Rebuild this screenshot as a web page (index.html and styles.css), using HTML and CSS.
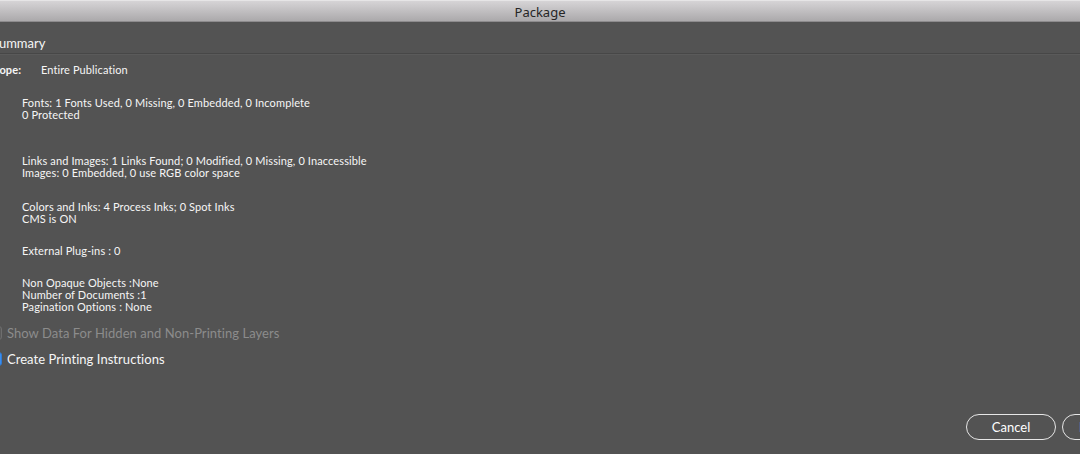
FILE: index.html
```html
<!DOCTYPE html>
<html>
<head>
<meta charset="utf-8">
<link rel="stylesheet" href="styles.css">
</head>
<body>
<div class="window">
  <div class="titlebar">Package</div>
  <div class="content">
    <div class="section-header">Summary</div>
    <div class="scope">
      <span class="scope-label">Scope:</span>
      <span class="scope-value">Entire Publication</span>
    </div>
    <div class="info info-fonts">
      <div>Fonts: 1 Fonts Used, 0 Missing, 0 Embedded, 0 Incomplete</div>
      <div>0 Protected</div>
    </div>
    <div class="info info-links">
      <div>Links and Images: 1 Links Found; 0 Modified, 0 Missing, 0 Inaccessible</div>
      <div>Images: 0 Embedded, 0 use RGB color space</div>
    </div>
    <div class="info info-colors">
      <div>Colors and Inks: 4 Process Inks; 0 Spot Inks</div>
      <div>CMS is ON</div>
    </div>
    <div class="info info-plugins">
      <div>External Plug-ins : 0</div>
    </div>
    <div class="info info-misc">
      <div>Non Opaque Objects :None</div>
      <div>Number of Documents :1</div>
      <div>Pagination Options : None</div>
    </div>
    <label class="check check-disabled"><span class="box"></span><span>Show Data For Hidden and Non-Printing Layers</span></label>
    <label class="check check-on"><span class="box"></span><span>Create Printing Instructions</span></label>
  </div>
  <div class="footer">
    <button class="btn">Cancel</button>
    <button class="btn">Package...</button>
  </div>
</div>
</body>
</html>
```
FILE: styles.css
```css
html, body {
  margin: 0;
  padding: 0;
  width: 1080px;
  height: 454px;
  overflow: hidden;
  background: #535353;
}
.window {
  width: 1080px;
  height: 454px;
  display: flex;
  flex-direction: column;
  font-family: "Lato", "Liberation Sans", sans-serif;
  color: #f6f6f6;
}
.titlebar {
  height: 20px;
  line-height: 22px;
  text-align: center;
  font-family: "Noto Sans", "Liberation Sans", sans-serif;
  font-size: 13px;
  color: #262626;
  background: linear-gradient(#d6d4d6, #aba9ab);
  border-top: 1px solid #e6e5e6;
  border-bottom: 1px solid #8d8b8d;
}
.content {
  margin-left: -12px;
  display: flex;
  flex-direction: column;
}
.section-header {
  margin-top: 13px;
  padding-left: 4px;
  font-size: 13px;
  line-height: 16px;
  padding-bottom: 2px;
  border-bottom: 1px solid #474747;
  box-shadow: 0 1px 0 #5a5a5a;
  width: 1200px;
}
.scope {
  margin-top: 10px;
  display: flex;
  font-size: 11px;
  line-height: 12px;
  letter-spacing: 0.1px;
}
.scope-label {
  width: 53px;
  font-weight: bold;
}
.info {
  padding-left: 34px;
  font-size: 11px;
  line-height: 12px;
  letter-spacing: 0.12px;
}
.info-fonts { margin-top: 21px; }
.info-links { margin-top: 34px; }
.info-colors { margin-top: 22px; }
.info-plugins { margin-top: 20px; }
.info-misc { margin-top: 20px; }
.check {
  display: flex;
  align-items: center;
  gap: 5px;
  font-size: 13px;
  line-height: 16px;
  letter-spacing: 0.05px;
}
.check-disabled {
  margin-top: 12px;
  color: #8c8c8c;
}
.check-on {
  margin-top: 10px;
  color: #f6f6f6;
}
.box {
  width: 14px;
  height: 14px;
  border-radius: 3px;
  box-sizing: border-box;
  flex: none;
}
.check-disabled .box {
  border: 1px solid #6e6e6e;
  background: #5a5a5a;
}
.check-on .box {
  background: #3a8ef0;
  border: 1px solid #2f7ad4;
}
.footer {
  margin-top: auto;
  margin-bottom: 14px;
  margin-right: -72px;
  display: flex;
  justify-content: flex-end;
  gap: 6px;
}
.btn {
  width: 90px;
  height: 26px;
  border: 1.5px solid #e6e6e6;
  border-radius: 13px;
  background: transparent;
  color: #ffffff;
  font-family: "Lato", "Liberation Sans", sans-serif;
  font-size: 13px;
  padding: 0;
}
```
